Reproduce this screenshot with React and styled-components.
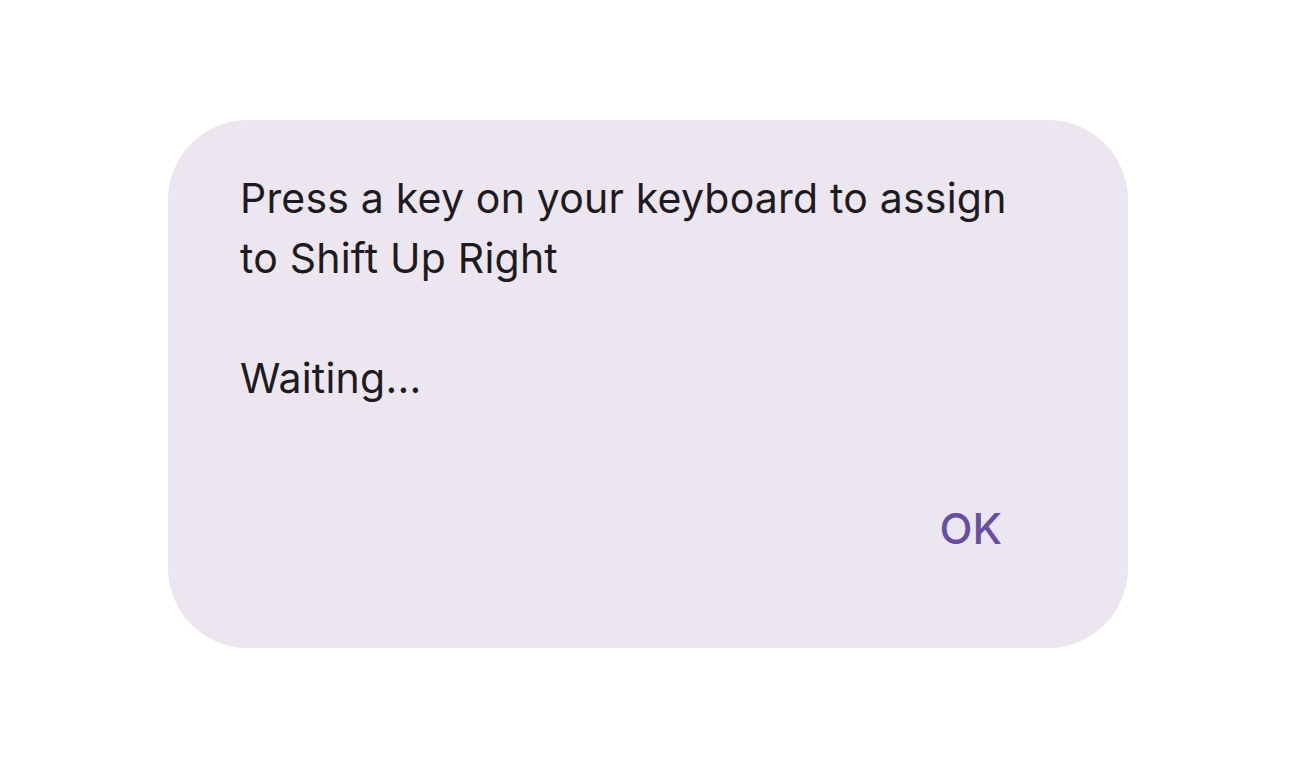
import styled, { createGlobalStyle } from 'styled-components'

const GlobalStyle = createGlobalStyle`
  html, body {
    margin: 0;
    padding: 0;
    background: #ffffff;
  }
  body {
    font-family: Inter, "Noto Sans", sans-serif;
  }
`

const Page = styled.div`
  width: 1296px;
  height: 768px;
  display: flex;
  align-items: center;
  justify-content: center;
`

const Dialog = styled.div`
  box-sizing: border-box;
  width: 960px;
  height: 528px;
  padding: 48px 72px 75px 72px;
  background: #ece6f0;
  border-radius: 80px;
  display: flex;
  flex-direction: column;
`

const Message = styled.p`
  margin: 0;
  font-size: 41px;
  line-height: 60px;
  color: #1d1b20;
  white-space: pre-line;
  letter-spacing: 0.2px;
`

const Actions = styled.div`
  margin-top: 75px;
  display: flex;
  justify-content: flex-end;
`

const TextButton = styled.button`
  height: 90px;
  padding: 0 54px;
  border: none;
  background: transparent;
  font-family: Inter, "Noto Sans", sans-serif;
  font-size: 43px;
  font-weight: 500;
  line-height: 90px;
  color: #6750a4;
  cursor: pointer;
`

function App() {
  return (
    <>
      <GlobalStyle />
      <Page>
        <Dialog>
          <Message>
            {'Press a key on your keyboard to assign\nto Shift Up Right\n\nWaiting...'}
          </Message>
          <Actions>
            <TextButton>OK</TextButton>
          </Actions>
        </Dialog>
      </Page>
    </>
  )
}

export default App
